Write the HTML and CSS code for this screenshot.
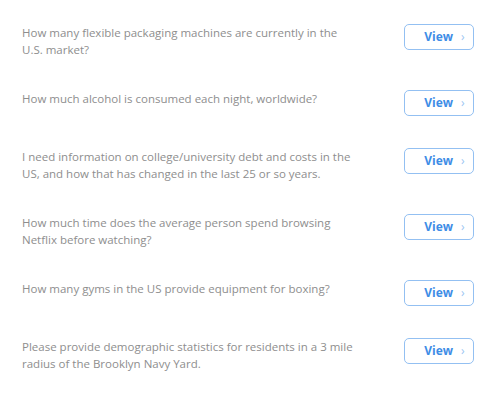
FILE: index.html
```html
<!DOCTYPE html>
<html>
<head>
<meta charset="utf-8">
<link rel="stylesheet" href="styles.css">
</head>
<body>
<div class="list">
  <div class="row">
    <p class="q">How many flexible packaging machines are currently in the<br>U.S. market?</p>
    <button class="view">View <span class="chev">›</span></button>
  </div>
  <div class="row">
    <p class="q">How much alcohol is consumed each night, worldwide?</p>
    <button class="view">View <span class="chev">›</span></button>
  </div>
  <div class="row">
    <p class="q">I need information on college/university debt and costs in the<br>US, and how that has changed in the last 25 or so years.</p>
    <button class="view">View <span class="chev">›</span></button>
  </div>
  <div class="row">
    <p class="q">How much time does the average person spend browsing<br>Netflix before watching?</p>
    <button class="view">View <span class="chev">›</span></button>
  </div>
  <div class="row">
    <p class="q">How many gyms in the US provide equipment for boxing?</p>
    <button class="view">View <span class="chev">›</span></button>
  </div>
  <div class="row">
    <p class="q">Please provide demographic statistics for residents in a 3 mile<br>radius of the Brooklyn Navy Yard.</p>
    <button class="view">View <span class="chev">›</span></button>
  </div>
</div>
</body>
</html>
```

FILE: styles.css
```css
html, body {
  margin: 0;
  padding: 0;
  background: #ffffff;
}
body {
  font-family: "Open Sans", Lato, sans-serif;
}
.list {
  display: flex;
  flex-direction: column;
  gap: 32px;
  padding: 23.5px 26px 0 22px;
}
.row {
  display: flex;
  align-items: flex-start;
  justify-content: space-between;
}
.q {
  margin: 0;
  font-size: 11.5px;
  line-height: 17px;
  color: #8e8e8e;
  white-space: nowrap;
}
.view {
  box-sizing: border-box;
  width: 70px;
  height: 26px;
  margin: 0;
  padding: 0 0 1px 11px;
  border: 1px solid #93c0f2;
  border-radius: 5px;
  background: #fff;
  font-family: "Open Sans", sans-serif;
  font-weight: 700;
  font-size: 12px;
  color: #3e8de6;
  display: flex;
  align-items: center;
  justify-content: center;
  gap: 8px;
}
.chev {
  font-weight: 400;
  font-size: 12px;
  color: #9cc5f2;
}
```
